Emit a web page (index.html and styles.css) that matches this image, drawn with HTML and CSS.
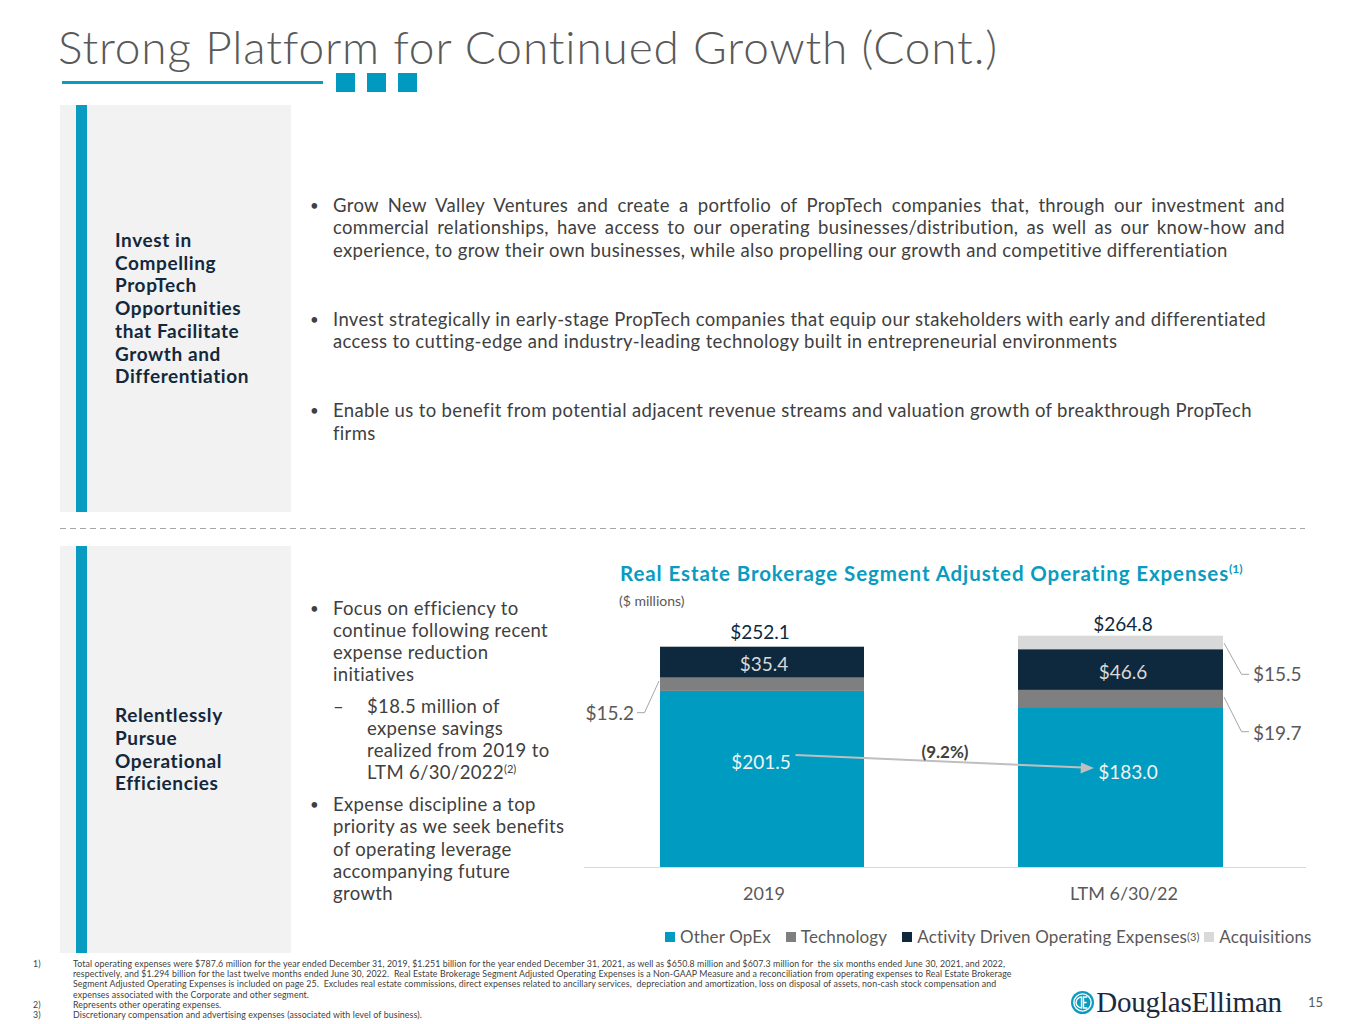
FILE: index.html
```html
<!DOCTYPE html>
<html lang="en">
<head>
<meta charset="utf-8">
<title>Strong Platform for Continued Growth (Cont.)</title>
<link rel="stylesheet" href="styles.css">
</head>
<body>
<div class="slide">
  <header class="head">
    <h1 class="title">Strong Platform for Continued Growth (Cont.)</h1>
    <div class="rule"><span class="rule-line"></span><span class="sq"></span><span class="sq"></span><span class="sq"></span></div>
  </header>

  <section class="row row-top">
    <div class="side">
      <div class="side-bar"></div>
      <div class="side-text">Invest in<br>Compelling<br>PropTech<br>Opportunities<br>that Facilitate<br>Growth and<br>Differentiation</div>
    </div>
    <ul class="bullets top-bullets">
      <li><span class="bul">•</span><div><span class="jl">Grow New Valley Ventures and create a portfolio of PropTech companies that, through our investment and</span><span class="jl">commercial relationships, have access to our operating businesses/distribution, as well as our know-how and</span>experience, to grow their own businesses, while also propelling our growth and competitive differentiation</div></li>
      <li><span class="bul">•</span><div>Invest strategically in early-stage PropTech companies that equip our stakeholders with early and differentiated<br>access to cutting-edge and industry-leading technology built in entrepreneurial environments</div></li>
      <li><span class="bul">•</span><div>Enable us to benefit from potential adjacent revenue streams and valuation growth of breakthrough PropTech<br>firms</div></li>
    </ul>
  </section>

  <div class="dash"></div>

  <section class="row row-bottom">
    <div class="side">
      <div class="side-bar"></div>
      <div class="side-text">Relentlessly<br>Pursue<br>Operational<br>Efficiencies</div>
    </div>
    <div class="mid">
      <ul class="bullets">
        <li><span class="bul">•</span><div>Focus on efficiency to<br>continue following recent<br>expense reduction<br>initiatives
          <ul class="bullets sub">
            <li><span class="subdash">–</span><div>$18.5 million of<br>expense savings<br>realized from 2019 to<br>LTM 6/30/2022<sup class="fn">(2)</sup></div></li>
          </ul>
        </div></li>
        <li><span class="bul">•</span><div>Expense discipline a top<br>priority as we seek benefits<br>of operating leverage<br>accompanying future<br>growth</div></li>
      </ul>
    </div>
    <div class="chart">
      <h2 class="chart-title">Real Estate Brokerage Segment Adjusted Operating Expenses<sup>(1)</sup></h2>
      <div class="chart-sub">($ millions)</div>
      <svg class="plot" width="732" height="300" viewBox="0 0 732 300">
        <!-- bar 2019 -->
        <rect x="81" y="80.9" width="204" height="176.1" fill="#009bc0"/>
        <rect x="81" y="67.6" width="204" height="13.3" fill="#7f7f7f"/>
        <rect x="81" y="36.7" width="204" height="30.9" fill="#0e293d"/>
        <!-- bar LTM -->
        <rect x="439" y="97.1" width="205" height="159.9" fill="#009bc0"/>
        <rect x="439" y="79.9" width="205" height="17.2" fill="#7f7f7f"/>
        <rect x="439" y="39.2" width="205" height="40.7" fill="#0e293d"/>
        <rect x="439" y="25.7" width="205" height="13.5" fill="#d9d9d9"/>
        <!-- axis -->
        <line x1="5" y1="257.5" x2="727" y2="257.5" stroke="#d9d9d9" stroke-width="1"/>
        <!-- leaders -->
        <polyline points="58,102.7 65.5,102.7 80,71" fill="none" stroke="#a6a6a6" stroke-width="1"/>
        <polyline points="645,33 662.5,64.3 670,64.3" fill="none" stroke="#a6a6a6" stroke-width="1"/>
        <polyline points="645,87 662.5,121.7 670,121.7" fill="none" stroke="#a6a6a6" stroke-width="1"/>
        <!-- arrow -->
        <line x1="216.5" y1="145" x2="504" y2="157.6" stroke="#bfbfbf" stroke-width="2"/>
        <polygon points="515,158.1 502,152.6 501.6,163.4" fill="#bfbfbf"/>
        <!-- labels -->
        <text class="v total" x="181" y="28.5" text-anchor="middle">$252.1</text>
        <text class="v total" x="544" y="21" text-anchor="middle">$264.8</text>
        <text class="v light" x="185" y="61" text-anchor="middle">$35.4</text>
        <text class="v light" x="544" y="69" text-anchor="middle">$46.6</text>
        <text class="v inner" x="182" y="158.7" text-anchor="middle">$201.5</text>
        <text class="v inner" x="549" y="168.7" text-anchor="middle">$183.0</text>
        <text class="v side-l" x="55" y="109.7" text-anchor="end">$15.2</text>
        <text class="v side-l" x="674" y="71.3">$15.5</text>
        <text class="v side-l" x="674" y="129.7">$19.7</text>
        <text class="pct" x="366" y="148" text-anchor="middle">(9.2%)</text>
        <text class="cat" x="185" y="289.5" text-anchor="middle">2019</text>
        <text class="cat" x="545" y="289.5" text-anchor="middle">LTM 6/30/22</text>
      </svg>
      <div class="legend">
        <span class="lg"><i class="mk mk-opex"></i>Other OpEx</span>
        <span class="lg"><i class="mk mk-tech"></i>Technology</span>
        <span class="lg lg-tight"><i class="mk mk-act"></i>Activity Driven Operating Expenses<sup class="fn">(3)</sup></span>
        <span class="lg"><i class="mk mk-acq"></i>Acquisitions</span>
      </div>
    </div>
  </section>

  <footer class="foot">
    <ol class="notes">
      <li><span class="num">1)</span><span class="ntext">Total operating expenses were $787.6 million for the year ended December 31, 2019, $1.251 billion for the year ended December 31, 2021, as well as $650.8 million and $607.3 million for&nbsp; the six months ended June 30, 2021, and 2022,<br>respectively, and $1.294 billion for the last twelve months ended June 30, 2022.&nbsp; Real Estate Brokerage Segment Adjusted Operating Expenses is a Non-GAAP Measure and a reconciliation from operating expenses to Real Estate Brokerage<br>Segment Adjusted Operating Expenses is included on page 25.&nbsp; Excludes real estate commissions, direct expenses related to ancillary services,&nbsp; depreciation and amortization, loss on disposal of assets, non-cash stock compensation and<br>expenses associated with the Corporate and other segment.</span></li>
      <li><span class="num">2)</span><span class="ntext">Represents other operating expenses.</span></li>
      <li><span class="num">3)</span><span class="ntext">Discretionary compensation and advertising expenses (associated with level of business).</span></li>
    </ol>
    <div class="brand">
      <svg class="logo-mark" width="23" height="23" viewBox="0 0 24 24" aria-hidden="true">
        <circle cx="12" cy="12" r="12" fill="#0a9cc0"/>
        <circle cx="12" cy="12" r="9" fill="none" stroke="#fff" stroke-width="1.5"/>
        <path d="M11 6.3 A5.7 5.7 0 0 0 11 17.7 Z" fill="none" stroke="#fff" stroke-width="1.5" stroke-linejoin="round"/>
        <path d="M17 6.3 H13 V17.7 H17 M13 12 H16.3" fill="none" stroke="#fff" stroke-width="1.5"/>
      </svg>
      <span class="wordmark">DouglasElliman</span>
      <span class="page">15</span>
    </div>
  </footer>
</div>
</body>
</html>
```

FILE: styles.css
```css
html, body {
  margin: 0;
  padding: 0;
  background: #ffffff;
}

body {
  font-family: Lato, "Open Sans", "DejaVu Sans", sans-serif;
  color: #404040;
}

.slide {
  width: 1365px;
  height: 1024px;
  overflow: hidden;
  display: flex;
  flex-direction: column;
}

/* ---------- header ---------- */
.title {
  margin: 20px 0 0 58px;
  font-weight: 300;
  font-size: 46px;
  line-height: 54px;
  color: #595959;
  letter-spacing: 0.85px;
  white-space: nowrap;
}

.rule {
  display: flex;
  align-items: center;
  height: 19px;
  margin: -1px 0 0 62px;
}

.rule-line {
  width: 261px;
  height: 3px;
  background: #0a9cc0;
  margin-right: 13px;
}

.sq {
  width: 19px;
  height: 19px;
  background: #0099c0;
  margin-right: 12px;
}

/* ---------- rows ---------- */
.row {
  display: flex;
  margin-left: 60px;
  height: 407px;
  flex: none;
}

.row-top {
  margin-top: 13px;
}

.row-bottom {
  margin-top: 17px;
}

.side {
  flex: none;
  width: 231px;
  background: #f2f2f2;
  display: flex;
  align-items: center;
}

.side-bar {
  align-self: stretch;
  width: 11px;
  margin-left: 16px;
  background: #0a9cc0;
}

.side-text {
  margin-left: 28px;
  font-weight: 700;
  font-size: 19px;
  line-height: 22.7px;
  letter-spacing: 0.6px;
  color: #14283c;
  white-space: nowrap;
}

.bullets {
  list-style: none;
  margin: 0;
  padding: 0;
}

.bullets li {
  display: flex;
}

.bullets li > div {
  flex: 1;
  min-width: 0;
}

.bul {
  flex: none;
  width: 24px;
  font-size: 15px;
  padding-left: 1px;
  box-sizing: border-box;
}

.top-bullets {
  margin-left: 18px;
  width: 976px;
  padding-top: 88.5px;
  font-size: 18.5px;
  line-height: 22.5px;
  letter-spacing: 0.35px;
  color: #404040;
}

.top-bullets li {
  margin-bottom: 46.5px;
}

.jl {
  display: block;
  text-align: justify;
  text-align-last: justify;
}

.dash {
  flex: none;
  margin: 16px 0 0 60px;
  width: 1245px;
  height: 1px;
  background: repeating-linear-gradient(90deg, #a6a6a6 0 6px, transparent 6px 10px);
}

.mid {
  flex: none;
  margin-left: 18px;
  width: 258px;
  padding-top: 50.5px;
  font-size: 18.5px;
  line-height: 22.2px;
  letter-spacing: 0.35px;
  color: #404040;
  white-space: nowrap;
}

.mid > .bullets > li + li {
  margin-top: 9.5px;
}

.sub {
  margin: 9.5px 0 0 0;
}

.subdash {
  flex: none;
  width: 34px;
}

sup.fn {
  font-size: 11px;
  line-height: 0;
  vertical-align: 6px;
  letter-spacing: 0;
}

/* ---------- chart ---------- */
.chart {
  flex: none;
  margin-left: 12px;
  width: 732px;
  display: flex;
  flex-direction: column;
}

.chart-title {
  margin: 15px 0 0 41px;
  font-size: 20.5px;
  line-height: 24px;
  font-weight: 700;
  letter-spacing: 0.9px;
  color: #0a9bc0;
  white-space: nowrap;
}

.chart-title sup {
  font-size: 12px;
  line-height: 0;
  vertical-align: 8px;
  letter-spacing: 0;
}

.chart-sub {
  margin: 6.5px 0 0 40px;
  font-size: 14px;
  line-height: 17px;
  color: #595959;
}

.plot {
  display: block;
  margin-top: 1.5px;
}

.plot text {
  font-family: Lato, "Open Sans", sans-serif;
}

.v {
  font-size: 19px;
}

.total {
  fill: #0e293d;
}

.light {
  fill: #d9d9d9;
}

.inner {
  fill: #f2f2f2;
}

.side-l {
  fill: #595959;
}

.pct {
  font-size: 17px;
  font-weight: 700;
  fill: #404040;
}

.cat {
  font-size: 18px;
  fill: #595959;
}

.legend {
  display: flex;
  align-items: center;
  margin: 17px 0 0 86px;
  font-size: 17px;
  line-height: 20px;
  letter-spacing: 0.15px;
  color: #595959;
  white-space: nowrap;
}

.lg {
  display: flex;
  align-items: center;
  margin-right: 15px;
}

.lg-tight {
  margin-right: 5px;
}

.mk {
  display: inline-block;
  width: 10px;
  height: 10px;
  margin-right: 5px;
}

.mk-opex { background: #009bc0; }
.mk-tech { background: #7f7f7f; }
.mk-act { background: #0e293d; }
.mk-acq { background: #d9d9d9; }

.legend sup.fn {
  font-size: 11px;
  vertical-align: 7px;
}

/* ---------- footer ---------- */
.foot {
  flex: 1;
  display: flex;
  margin-top: 6px;
  padding-left: 33px;
  padding-right: 42px;
}

.notes {
  list-style: none;
  margin: 0;
  padding: 0;
  font-size: 8.8px;
  line-height: 10.2px;
  letter-spacing: 0.1px;
  color: #404040;
  white-space: nowrap;
}

.notes li {
  display: flex;
}

.num {
  flex: none;
  width: 40px;
}

.brand {
  margin-left: auto;
  align-self: flex-end;
  display: flex;
  align-items: center;
  height: 30px;
  margin-bottom: 7px;
}

.logo-mark {
  display: block;
  margin-right: 2px;
}

.wordmark {
  font-family: "Liberation Serif", "Times New Roman", serif;
  font-size: 29px;
  line-height: 30px;
  color: #1c2a40;
  letter-spacing: -0.2px;
}

.page {
  margin-left: 26px;
  font-size: 13px;
  color: #595959;
}
```
